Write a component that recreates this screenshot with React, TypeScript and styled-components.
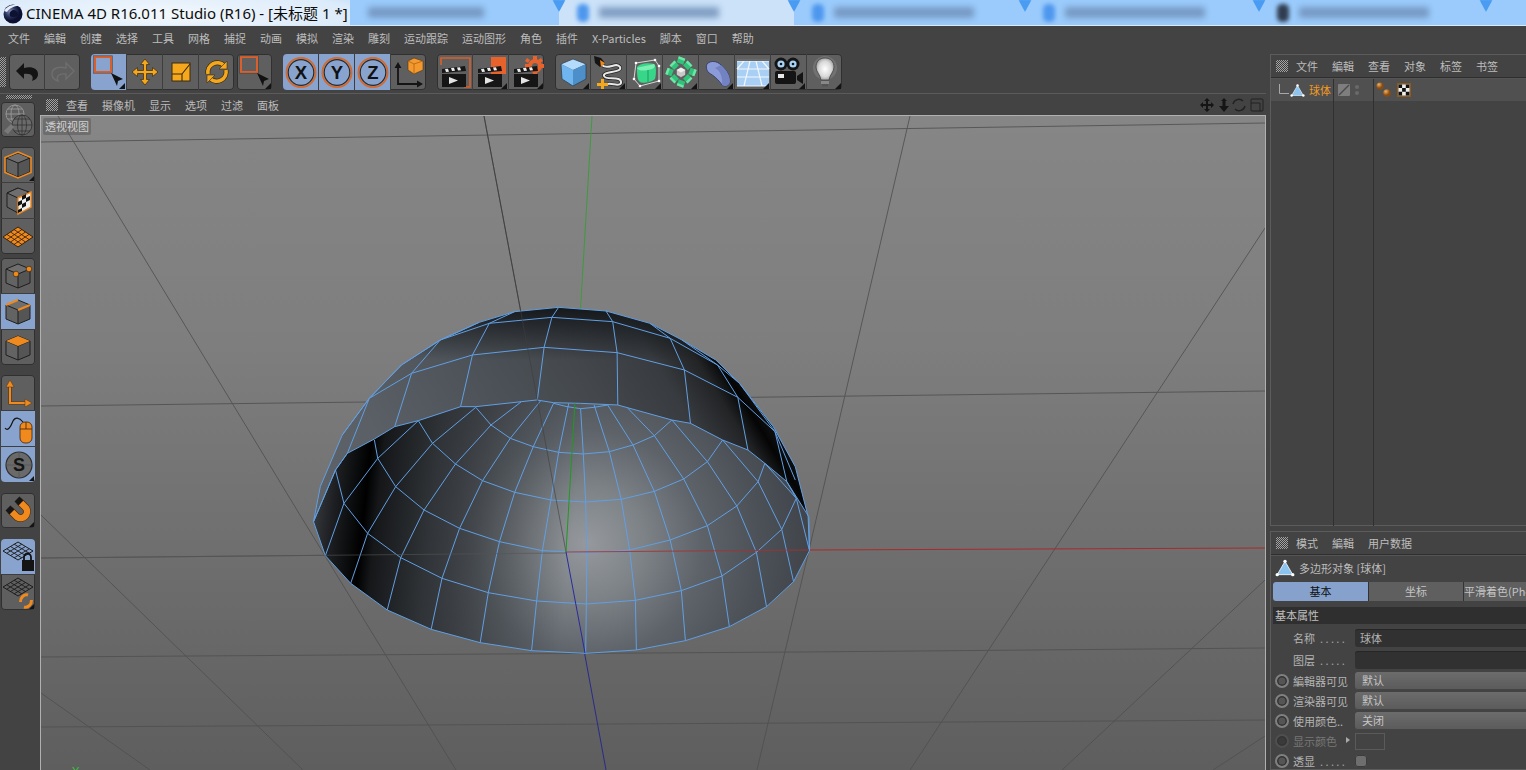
import React from "react";
import styled, { createGlobalStyle } from "styled-components";

const GlobalStyle = createGlobalStyle`
  html, body { margin: 0; padding: 0; width: 1526px; height: 770px; overflow: hidden; background: #434343; }
  * { box-sizing: border-box; }
`;

const CJK = `"Noto Sans CJK SC", "Noto Sans", sans-serif`;
const dots = `repeating-conic-gradient(#b4b4b4 0 25%, #3c3c3c 0 50%) 0 0 / 2px 2px`;

const Page = styled.div`
  width: 1526px; height: 770px; overflow: hidden; display: flex; flex-direction: column;
  background: #434343; font-family: ${CJK}; font-size: 11px; color: #bcbcbc;
`;
const TitleBar = styled.div`
  height: 26px; flex: none; display: flex; border-bottom: 1px solid #dcebf8; overflow: hidden;
`;
const TitleLeft = styled.div`
  width: 350px; flex: none; display: flex; align-items: center; padding-left: 2px; gap: 2px;
  background: radial-gradient(ellipse 275px 36px at 165px 14px, #f3f8fc 0, #dcebfa 68%, #a5d0fb 100%);
  background-color: #a5d0fb;
`;
const TitleText = styled.span`
  font-family: "Noto Sans", "Noto Sans CJK SC", sans-serif; font-size: 15px; color: #0c0c0c; white-space: nowrap; line-height: 24px;
`;
const BlurTab = styled.div<{ $w: number; $active?: boolean; $plain?: boolean }>`
  position: relative; width: ${(p) => p.$w}px; flex: none; display: flex; align-items: center; gap: 10px; padding-left: 18px;
  background: ${(p) => (p.$active ? "#cbe2f9" : "#9acbfc")};
  &::before {
    content: ""; display: ${(p) => (p.$plain ? "none" : "block")}; position: absolute; left: -7px; top: -1px; width: 14px; height: 13px;
    background: #4a9cf2; clip-path: polygon(0 0, 100% 0, 50% 100%); filter: blur(1px); z-index: 1;
  }
`;
const TabIcon = styled.i<{ $dark?: boolean }>`
  width: 12px; height: 18px; border-radius: 5px; flex: none; filter: blur(2px);
  background: ${(p) => (p.$dark ? "#303c50" : "#4e97ee")};
`;
const TabGhost = styled.i<{ $w: number }>`
  width: ${(p) => p.$w}px; height: 11px; flex: none; filter: blur(3px); background: #6e8db6; opacity: .8;
`;
const MenuBar = styled.div`
  height: 24px; flex: none; display: flex; align-items: center; gap: 14px; padding-left: 8px; line-height: 24px;
`;
const Item = styled.span`
  white-space: nowrap; font-size: 11px; color: #bdbdbd;
`;
const Main = styled.div`
  flex: 1; display: flex; min-height: 0;
`;
const LeftArea = styled.div`
  width: 1266px; flex: none; display: flex; flex-direction: column; margin-right: 4px;
`;
const Toolbar = styled.div`
  height: 44px; flex: none; display: flex; padding-top: 4px; border-bottom: 1px solid #5b5b5b; gap: 11px; width: 1266px;
`;
const Handle = styled.i`
  width: 6px; height: 30px; margin: 3px -8px 0 0; background: ${dots}; opacity: .8;
`;
const Cluster = styled.div`
  display: flex; gap: 3px;
`;
const ToolGroup = styled.div`
  display: flex; height: 36px; border-radius: 4px; overflow: hidden; box-shadow: inset 0 0 0 1px #303030; background: #5f5f5f;
`;
const ToolButton = styled.div<{ $active?: boolean; $corner?: boolean }>`
  position: relative; width: 36px; height: 36px; flex: none; display: flex; align-items: center; justify-content: center;
  border-left: 1px solid #3e3e3e; background: ${(p) => (p.$active ? "#88a4ce" : "transparent")};
  &:first-child { width: 35px; border-left: 0; }
  &::after {
    content: ""; display: ${(p) => (p.$corner ? "block" : "none")}; position: absolute; right: 1px; bottom: 1px;
    border-style: solid; border-width: 0 0 6px 6px; border-color: transparent transparent #141414 transparent;
  }
`;
const Workspace = styled.div`
  flex: 1; display: flex; min-height: 0;
`;
const Sidebar = styled.div`
  width: 40px; flex: none; padding-left: 1px; display: flex; flex-direction: column;
`;
const SideHandle = styled.i`
  width: 26px; height: 4px; margin: 1px 0 3px 5px; background: ${dots}; opacity: .8;
`;
const SideGroup = styled.div<{ $gap: number }>`
  width: 34px; margin-top: ${(p) => p.$gap}px; border-radius: 4px; overflow: hidden; box-shadow: inset 0 0 0 1px #303030;
  background: #5f5f5f; display: flex; flex-direction: column;
`;
const SideButton = styled.div<{ $active?: boolean; $corner?: boolean }>`
  position: relative; height: 36px; flex: none; display: flex; align-items: center; justify-content: center;
  border-top: 1px solid #3e3e3e; background: ${(p) => (p.$active ? "#88a4ce" : "transparent")};
  &:first-child { height: 35px; border-top: 0; }
  &::after {
    content: ""; display: ${(p) => (p.$corner ? "block" : "none")}; position: absolute; right: 1px; bottom: 1px;
    border-style: solid; border-width: 0 0 5px 5px; border-color: transparent transparent #141414 transparent;
  }
`;
const ViewPanel = styled.div`
  flex: 1; display: flex; flex-direction: column; min-width: 0;
`;
const PanelHeader = styled.div<{ $h: number; $pad: number }>`
  height: ${(p) => p.$h}px; flex: none; display: flex; align-items: center; padding-left: ${(p) => p.$pad}px; gap: 14px;
`;
const PanelHandle = styled.i`
  width: 12px; height: 12px; flex: none; background: ${dots}; margin-right: -6px; opacity: .85;
`;
const HeaderIcons = styled.div`
  margin-left: auto; display: flex; align-items: center; gap: 2px; padding-right: 1px;
`;
const Viewport = styled.div`
  position: relative; flex: 1; min-height: 0; overflow: hidden; border: 1px solid #b0b0b0; border-bottom: 0;
  background: linear-gradient(180deg, #868686 0, #7e7e7e 35%, #6d6d6d 70%, #5e5e5e 100%);
  svg { display: block; }
`;
const ViewLabel = styled.span`
  position: absolute; left: 2px; top: 2px; height: 17px; line-height: 17px; padding: 0 2px; border-radius: 2px;
  background: rgba(90, 90, 90, .55); color: #d0d0d0; font-size: 11px;
`;
const RightCol = styled.div`
  flex: 1; min-width: 0; display: flex; flex-direction: column; padding-top: 4px; gap: 5px;
`;
const Panel = styled.div<{ $h?: number }>`
  ${(p) => (p.$h ? `height: ${p.$h}px; flex: none;` : "flex: 1; min-height: 0;")}
  border: 1px solid #5c5c5c; border-right: 0; border-bottom: 0; display: flex; flex-direction: column; overflow: hidden;
  box-shadow: inset 0 -1px 0 #5c5c5c;
`;
const PanelBar = styled(PanelHeader)`
  border-bottom: 1px solid #2f2f2f; box-shadow: 0 1px 0 #555;
`;
const ObjColumns = styled.div`
  flex: 1; display: grid; grid-template-columns: 63px 40px 1fr; margin-top: 1px; min-height: 0;
`;
const ObjCol = styled.div<{ $last?: boolean }>`
  border-right: ${(p) => (p.$last ? "0" : "1px solid #303030")};
`;
const ObjCell = styled.div<{ $pad: number }>`
  height: 22px; background: #505050; display: flex; align-items: center; padding-left: ${(p) => p.$pad}px; gap: 4px;
`;
const ObjName = styled.span`
  color: #f29a1e; font-size: 11px;
`;
const ObjRow = styled.div`
  height: 27px; flex: none; display: flex; align-items: center; gap: 4px; padding-left: 4px; padding-bottom: 2px;
`;
const Tabs = styled.div`
  display: flex; margin: 0 0 0 2px; height: 19px; flex: none; border-radius: 3px 0 0 3px; overflow: hidden;
  box-shadow: inset 0 0 0 1px #2e2e2e;
`;
const Tab = styled.div<{ $active?: boolean; $w: number }>`
  width: ${(p) => p.$w}px; flex: none; text-align: center; line-height: 18px; white-space: nowrap; font-size: 11px;
  border-left: 1px solid #333; overflow: hidden;
  background: ${(p) => (p.$active ? "#86a2cc" : "#5f5f5f")}; color: ${(p) => (p.$active ? "#101010" : "#c4c4c4")};
  &:first-child { border-left: 0; }
`;
const SectionBar = styled.div`
  height: 17px; flex: none; margin: 6px 0 0 2px; background: #2f2f2f; padding-left: 2px; line-height: 17px; color: #c0c0c0;
`;
const AttrList = styled.div`
  display: flex; flex-direction: column; padding-left: 4px;
`;
const AttrRow = styled.div<{ $gap: number }>`
  height: 18px; flex: none; margin-top: ${(p) => p.$gap}px; display: flex; align-items: center;
`;
const Radio = styled.i<{ $dim?: boolean; $none?: boolean }>`
  width: 14px; height: 14px; flex: none; border-radius: 50%; margin-right: 4px; visibility: ${(p) => (p.$none ? "hidden" : "visible")};
  border: 2px solid ${(p) => (p.$dim ? "#4f4f4f" : "#808080")}; background: ${(p) => (p.$dim ? "#3a3a3a" : "#555")};
  box-shadow: inset 0 0 0 1.5px #343434;
`;
const AttrLabel = styled.span<{ $dim?: boolean }>`
  width: 62px; flex: none; white-space: nowrap; overflow: hidden; font-size: 11px; color: ${(p) => (p.$dim ? "#777" : "#b4b4b4")};
`;
const LabelDots = styled.span`
  letter-spacing: 2.4px; margin-left: 5px; color: #a0a0a0;
`;
const FieldBox = styled.div`
  flex: 1; height: 18px; margin-right: -8px; background: #313131; border-radius: 3px; padding-left: 5px; line-height: 18px; color: #b4b4b4;
  box-shadow: inset 0 1px 0 #262626;
`;
const SelectBox = styled.div`
  flex: 1; height: 18px; margin-right: -8px; border-radius: 3px; padding-left: 7px; line-height: 16px; color: #c6c6c6;
  background: linear-gradient(180deg, #6c6c6c, #5a5a5a); box-shadow: inset 0 -1px 0 #444;
`;
const Swatch = styled.i`
  width: 30px; height: 17px; flex: none; border: 1px solid #5a5a5a; background: #434343;
`;
const Arrow = styled.i`
  width: 0; height: 0; flex: none; margin: 0 5px 3px -9px; border-style: solid; border-width: 3px 0 3px 4px; border-color: transparent transparent transparent #aaa;
`;
const Check = styled.i`
  width: 12px; height: 12px; flex: none; border-radius: 3px; background: #6e6e6e; box-shadow: inset 0 0 0 1px #3c3c3c;
`;

/* ---------- icon drawings ---------- */
const Ico: React.FC<{ children: React.ReactNode; s?: number }> = ({ children, s = 34 }) => (
  <svg width={s} height={s} viewBox="0 0 34 34" style={{ flex: "none" }}>{children}</svg>
);
const OR = "#f5a81c";
const OR2 = "#f08a1e";
const Logo = () => (
  <svg width="22" height="22" viewBox="0 0 22 22">
    <defs><radialGradient id="lg" cx=".35" cy=".35"><stop offset="0" stopColor="#7f8fb8" /><stop offset=".6" stopColor="#27315a" /><stop offset="1" stopColor="#0b1030" /></radialGradient></defs>
    <circle cx="11" cy="12" r="9.5" fill="url(#lg)" />
    <path d="M2 9 C6 2 16 1 21 5 C17 3 9 4 5 10 Z" fill="#e8eef8" />
    <path d="M11 8 C14 8 16 10 16 13 C14 15 10 16 8 14 C7 11 8 9 11 8Z" fill="#0c1230" />
  </svg>
);
const Undo = () => <Ico><path d="M6 16 L14 8 V13 C21 11 28 13 28 19 C28 23 25 25 22 26 C24 22 22 18 14 19 V24 Z" fill="#141414" /></Ico>;
const Redo = () => <Ico><path d="M28 16 L20 8 V13 C13 11 6 13 6 19 C6 23 9 25 12 26 C10 22 12 18 20 19 V24 Z" fill="none" stroke="#6e6e6e" strokeWidth="1.4" /></Ico>;
const SelIcon = ({ fill }: { fill: string }) => (
  <Ico>
    <rect x="3" y="2" width="16" height="15" fill={fill} stroke="#d8602c" strokeWidth="2" />
    <rect x="1.6" y=".8" width="18.8" height="17.4" fill="none" stroke="#444" strokeWidth=".6" />
    <path d="M19 18 L31 24 L26 26 L25 31 Z" fill="#111" />
  </Ico>
);
const Move = () => <Ico><path d="M17 4 L21.5 9.5 H18.5 V15.5 H24.5 V12.5 L30 17 L24.5 21.5 V18.5 H18.5 V24.5 H21.5 L17 30 L12.5 24.5 H15.5 V18.5 H9.5 V21.5 L4 17 L9.5 12.5 V15.5 H15.5 V9.5 H12.5 Z" fill={OR} stroke="#3a2a10" strokeWidth=".7" /></Ico>;
const Scale = () => (
  <Ico>
    <rect x="8" y="8" width="18" height="18" fill={OR} stroke="#3a2a10" />
    <path d="M8 19 H18 V26 M18 19 L26 9" fill="none" stroke="#3a2a10" strokeWidth="1.1" />
  </Ico>
);
const Rotate = () => (
  <Ico>
    <g fill="none" strokeLinecap="butt">
      <path d="M8 19 A9.5 9.5 0 0 1 24 10.5 M26 15 A9.5 9.5 0 0 1 10 23.5" stroke="#3a2a10" strokeWidth="5" />
      <path d="M8 19 A9.5 9.5 0 0 1 24 10.5 M26 15 A9.5 9.5 0 0 1 10 23.5" stroke={OR} strokeWidth="3.6" />
    </g>
    <path d="M27 6 V14 H19 Z M7 28 V20 H15 Z" fill={OR} stroke="#3a2a10" strokeWidth=".6" />
  </Ico>
);
const Axis = ({ l }: { l: string }) => (
  <Ico>
    <circle cx="17" cy="17.5" r="14.6" fill="#88a4ce" stroke="#d8692a" strokeWidth="1.8" />
    <circle cx="17" cy="17.5" r="12.8" fill="#88a4ce" stroke="#2a2a2a" strokeWidth="1.2" />
    <text x="17" y="24" textAnchor="middle" fontFamily="Liberation Sans" fontWeight="700" fontSize="18.5" fill="#111">{l}</text>
  </Ico>
);
const Coord = () => (
  <Ico>
    <path d="M6 12 V29 H26" fill="none" stroke="#141414" strokeWidth="1.8" />
    <path d="M6 7 L9.5 13 H2.5 Z M31 29 L25 25.5 V32.5 Z" fill="#141414" />
    <path d="M22 3 L31 6 L31 15 L22 19 L16 15 L16 6 Z" fill="#f29a2e" stroke="#5a3410" strokeWidth=".6" />
    <path d="M16 6 L22 9 L31 6 M22 9 V19" fill="none" stroke="#b86010" strokeWidth=".8" />
  </Ico>
);
const Clap = ({ kind }: { kind: 0 | 1 | 2 }) => (
  <Ico>
    {kind === 0 && <path d="M3 10 V3 H32 V32 H26" fill="none" stroke="#d8602c" strokeWidth="1.6" />}
    {kind === 1 && <path d="M17 2 H32 V19 H17 Z" fill="#e8622c" />}
    {kind === 2 && (
      <g fill="#e8622c">
        <circle cx="25" cy="11" r="7" />
        <path d="M23 1 H27 V5 H23 Z M23 17 H27 V21 H23 Z M15 9 H19 V13 H15 Z M31 9 H34 V13 H31 Z M17 3 L20 5 L18 8 L15 6 Z M31 3 L33 6 L30 8 L28 5 Z" />
        <circle cx="25" cy="11" r="3" fill="#5f5f5f" />
      </g>
    )}
    <path d="M4 14 L27 11 L28 16 L4 18 Z" fill="#161616" />
    <path d="M7 14 l3 -.3 1 3 -3 .3 Z M13 13 l3 -.3 1 3 -3 .3 Z M19 12.5 l3 -.3 1 3 -3 .3 Z" fill="#eee" />
    <rect x="4" y="19" width="24" height="13" fill="#161616" />
    <path d="M11 22 L20 25.5 L11 29 Z" fill="#e4e4e4" />
  </Ico>
);
const BlueCube = () => (
  <Ico>
    <path d="M17 4 L30 9 L17 15 L5 9 Z" fill="#b3dcfc" />
    <path d="M5 9 L17 15 V31 L6 24 Z" fill="#6fb6f1" />
    <path d="M17 15 L30 9 V24 L17 31 Z" fill="#4d8fc9" />
    <path d="M17 4 L30 9 V24 L17 31 L6 24 L5 9 Z" fill="none" stroke="#2d3a48" strokeWidth=".7" />
  </Ico>
);
const Pen = () => (
  <Ico>
    <path d="M10 10 C16 16 24 6 28 12 C31 18 10 16 12 21 C14 26 30 20 29 28 C28 32 20 28 16 29" fill="none" stroke="#222" strokeWidth="3.4" />
    <path d="M10 10 C16 16 24 6 28 12 C31 18 10 16 12 21 C14 26 30 20 29 28 C28 32 20 28 16 29" fill="none" stroke="#e8e8e8" strokeWidth="2" />
    <path d="M2 1 L9 3 L13 8 L8 12 L3 8 Z" fill="#151515" />
    <path d="M8 5 L13 8 L9 12 Z" fill={OR2} />
    <path d="M9 24 H12 V28 H16 V31 H12 V35 H9 V31 H5 V28 H9 Z" fill={OR} />
  </Ico>
);
const Nurbs = () => (
  <Ico>
    <path d="M8 8 L27 5 L31 11 V26 L12 31 L6 24 Z" fill="none" stroke="#e4e4e4" strokeWidth=".9" />
    <path d="M9 13 C9 9 20 7 26 9 C29 10 28 22 27 24 C24 27 14 29 12 27 C9 25 9 18 9 13 Z" fill="#37d688" />
    <path d="M9 13 C12 12 22 10 26 9 C28 12 26 14 20 15 C15 16 11 16 9 13 Z" fill="#7bf0b2" />
    <path d="M20 15 V28" stroke="#1f9c60" strokeWidth="1" />
    <g fill="#fff"><circle cx="8" cy="8" r="1.3" /><circle cx="27" cy="5" r="1.3" /><circle cx="31" cy="11" r="1.3" /><circle cx="31" cy="26" r="1.3" /><circle cx="12" cy="31" r="1.3" /><circle cx="6" cy="24" r="1.3" /></g>
  </Ico>
);
const Flower = () => {
  const a = [0, 45, 90, 135, 180, 225, 270, 315];
  return (
    <Ico>
      {a.map((d, i) => (
        <g key={d} transform={`rotate(${d} 17 17) translate(17 ${i % 2 ? 7.5 : 5.5}) rotate(${i % 2 ? 0 : 20})`}>
          <rect x="-3.4" y="-3.2" width="6.8" height="6.4" fill="#2fc47a" />
          <rect x="-3.4" y="-3.2" width="6.8" height="2.4" fill="#6fe6a6" />
        </g>
      ))}
      <path d="M17 12.5 L21.5 15 V20 L17 22.5 L12.5 20 V15 Z" fill="#c8c8c8" stroke="#555" strokeWidth=".5" />
      <path d="M17 12.5 L21.5 15 L17 17.5 L12.5 15 Z" fill="#f0f0f0" />
    </Ico>
  );
};
const Bend = () => (
  <Ico>
    <path d="M7 9 C11 5 17 6 21 10 C27 15 30 21 30 27 C29 31 25 32 22 30 C19 25 13 20 9 18 C6 15 6 11 7 9 Z" fill="#8b9bd8" stroke="#2e3660" strokeWidth=".8" />
    <path d="M21 10 C27 15 30 21 30 27 C29 31 25 32 22 30 C23 24 21 16 15 13 Z" fill="#7282c2" />
  </Ico>
);
const Floor = () => (
  <Ico>
    <rect x="1" y="4" width="32" height="8" fill="#8a8a8a" />
    <path d="M1 6 H33 L33 31 H1 Z" fill="#a9d0f4" />
    <path d="M1 6 H33 M1 14 H33 M1 22 H33 M1 31 H33 M8 6 L1 14 M14 6 L8 31 M20 6 L26 31 M26 6 L33 14" stroke="#f0f6fc" strokeWidth="1.2" fill="none" />
    <rect x="1" y="4" width="32" height="2" fill="#6a6a6a" />
  </Ico>
);
const Camera = () => (
  <Ico>
    <circle cx="9" cy="9" r="6.5" fill="#141414" /><circle cx="21" cy="9" r="6.5" fill="#141414" />
    <circle cx="9" cy="9" r="3.6" fill="#a8d4f8" /><circle cx="21" cy="9" r="3.6" fill="#a8d4f8" />
    <circle cx="9" cy="9" r="1.3" fill="#141414" /><circle cx="21" cy="9" r="1.3" fill="#141414" />
    <rect x="3" y="16" width="21" height="13" rx="2" fill="#141414" />
    <rect x="6" y="19" width="6" height="4" fill="#e8e8e8" />
    <path d="M25 21 L31 17 V29 L25 25 Z" fill="#141414" />
  </Ico>
);
const Bulb = () => (
  <Ico>
    <defs><radialGradient id="bg"><stop offset="0" stopColor="#fff" /><stop offset=".7" stopColor="#d8d8d8" /><stop offset="1" stopColor="#a8a8a8" /></radialGradient></defs>
    <circle cx="17" cy="13" r="12" fill="#fff" opacity=".12" />
    <path d="M17 3 C23 3 26 7 26 12 C26 17 22 19 21 25 H13 C12 19 8 17 8 12 C8 7 11 3 17 3 Z" fill="url(#bg)" stroke="#444" strokeWidth=".8" />
    <rect x="13" y="26" width="8" height="3" fill="#888" /><rect x="14" y="29" width="6" height="2.5" fill="#555" />
  </Ico>
);
const CubeFaces = () => (
  <g>
    <path d="M17 5 L29 10 L17 15 L5 10 Z" fill="#6e6e6e" />
    <path d="M5 10 L17 15 V29 L5 24 Z" fill="#636363" />
    <path d="M17 15 L29 10 V24 L17 29 Z" fill="#555" />
    <path d="M17 5 L29 10 V24 L17 29 L5 24 V10 Z M5 10 L17 15 L29 10 M17 15 V29" fill="none" stroke="#1e1e1e" strokeWidth="1" />
  </g>
);
const Globe = () => (
  <Ico>
    <g fill="none" stroke="#9a9a9a" strokeWidth=".9">
      <circle cx="14" cy="11" r="9" /><ellipse cx="14" cy="11" rx="4" ry="9" /><path d="M5 11 H23 M7 6 H21 M7 16 H21" />
    </g>
    <g fill="#6a6a6a" stroke="#333" strokeWidth=".9">
      <circle cx="21" cy="22" r="10" />
    </g>
    <g fill="none" stroke="#333" strokeWidth=".8">
      <ellipse cx="21" cy="22" rx="4.5" ry="10" /><path d="M11 22 H31 M13 16 H29 M13 28 H29 M21 12 V32" />
    </g>
    <path d="M3 28 L10 21 L13 24 L7 31 Z" fill="#7a7a7a" />
  </Ico>
);
const ModelIcon = () => (
  <Ico>
    <CubeFaces />
    <path d="M17 4 L30 9.5 V24.5 L17 30 L4 24.5 V9.5 Z" fill="none" stroke={OR2} strokeWidth="1.6" />
  </Ico>
);
const TexIcon = () => (
  <Ico>
    <path d="M17 4 L6 9 V23 L17 29 Z" fill="#646464" stroke="#1e1e1e" />
    <path d="M6 9 L17 4 L28 8 L17 14 Z" fill="#6e6e6e" stroke="#1e1e1e" />
    <path d="M17 14 L30 8 V23 L17 30 Z" fill="#eee" stroke={OR2} strokeWidth="1.4" />
    <path d="M17 18 L21 16 V20 L17 22 Z M21 20 L25 18 V22 L21 24 Z M25 14 L29 12 V16 L25 18 Z M21 12 L25 10 V14 L21 16 Z M17 26 L21 24 V27 L17 29 Z" fill="#111" />
  </Ico>
);
const Workplane = () => (
  <Ico>
    <path d="M17 7 L32 17 L17 27 L2 17 Z" fill={OR2} stroke="#2a1a08" strokeWidth=".9" />
    <path d="M9.5 12 L24.5 22 M13 9.5 L28 19.5 M6 14.5 L21 24.5 M24.5 12 L9.5 22 M21 9.5 L6 19.5 M28 14.5 L13 24.5" stroke="#2a1a08" strokeWidth=".8" />
  </Ico>
);
const PointIcon = () => (
  <Ico>
    <CubeFaces />
    <circle cx="15" cy="15" r="2.8" fill={OR2} stroke="#2a1a08" strokeWidth=".6" />
    <circle cx="28" cy="10" r="2.8" fill={OR2} stroke="#2a1a08" strokeWidth=".6" />
  </Ico>
);
const EdgeIcon = () => (
  <Ico>
    <CubeFaces />
    <path d="M5 10 L17 5 M17 15 L29 10" stroke={OR2} strokeWidth="2" />
  </Ico>
);
const PolyIcon = () => (
  <Ico>
    <CubeFaces />
    <path d="M17 5 L29 10 L17 15 L5 10 Z" fill={OR2} />
  </Ico>
);
const OrangeAxis = () => (
  <Ico>
    <path d="M9 11 V27 H25" fill="none" stroke="#5a3410" strokeWidth="3.2" />
    <path d="M9 11 V27 H25" fill="none" stroke={OR2} strokeWidth="2" />
    <path d="M9 4 L13 11 H5 Z M31 27 L24 23 V31 Z" fill={OR2} stroke="#5a3410" strokeWidth=".5" />
  </Ico>
);
const Mouse = () => (
  <Ico>
    <path d="M4 16 C7 20 10 14 12 9 C14 5 18 5 22 10" fill="none" stroke="#141414" strokeWidth="1.2" />
    <rect x="19" y="10" width="12" height="21" rx="5" fill={OR2} stroke="#3a2208" strokeWidth=".8" />
    <path d="M19 17 H31 M25 10 V17" stroke="#3a2208" strokeWidth=".8" />
  </Ico>
);
const SnapS = () => (
  <Ico>
    <circle cx="18" cy="17" r="13" fill="#6a6a6a" stroke="#2e2e2e" strokeWidth="1.2" />
    <path d="M5 17 H31 M18 4 V30" stroke="#555" strokeWidth=".8" />
    <text x="18" y="23" textAnchor="middle" fontFamily="Liberation Sans" fontWeight="700" fontSize="18" fill="#141414">S</text>
  </Ico>
);
const Magnet = () => (
  <Ico>
    <path d="M9 16 L16 23 A6.5 6.5 0 0 0 25 14 L18 7" fill="none" stroke="#4a2a08" strokeWidth="7.6" />
    <path d="M9 16 L16 23 A6.5 6.5 0 0 0 25 14 L18 7" fill="none" stroke={OR2} strokeWidth="6.4" />
    <path d="M7 14 L11 18 M16 5 L20 9" stroke="#161616" strokeWidth="7" />
  </Ico>
);
const MiniGrid = () => (
  <g>
    <path d="M17 2 L32 11 L17 20 L2 11 Z" fill="none" stroke="#1c1c1c" strokeWidth="1" />
    <path d="M9.5 6.5 L24.5 15.5 M13.2 4.2 L28.2 13.2 M5.8 8.8 L20.8 17.8 M24.5 6.5 L9.5 15.5 M20.8 4.2 L5.8 13.2 M28.2 8.8 L13.2 17.8" stroke="#1c1c1c" strokeWidth=".9" />
  </g>
);
const GridLock = () => (
  <Ico>
    <MiniGrid />
    <path d="M24 19 V15 A3.5 3.5 0 0 1 31 15 V19" fill="none" stroke="#111" strokeWidth="1.8" transform="translate(-1 2)" />
    <rect x="21" y="20" width="12" height="11" fill="#141414" />
  </Ico>
);
const GridRot = () => (
  <Ico>
    <MiniGrid />
    <path d="M19.5 26 A6 7 0 0 1 27 19 M30.5 24 A6 7 0 0 1 23 31" fill="none" stroke={OR2} strokeWidth="3" />
  </Ico>
);
const Tri = ({ s = 18 }: { s?: number }) => (
  <svg width={s} height={s} viewBox="0 0 18 18" style={{ flex: "none" }}>
    <path d="M9 3 L16 15 H2 Z" fill="#8cc4f0" stroke="#fff" strokeWidth=".7" />
    <circle cx="9" cy="3" r="1.5" fill="#fff" /><circle cx="2" cy="15" r="1.5" fill="#fff" /><circle cx="16" cy="15" r="1.5" fill="#fff" />
  </svg>
);
const VpIcons = () => (
  <svg width="65" height="16" viewBox="0 0 65 16">
    <path d="M7 1 L10 4 H8 V7 H11 V5 L14 8 L11 11 V9 H8 V12 H10 L7 15 L4 12 H6 V9 H3 V11 L0 8 L3 5 V7 H6 V4 H4 Z" fill="#151515" />
    <path d="M24 1 L27 4 H25.5 V9 H29 L24 15 L19 9 H22.5 V4 H21 Z" fill="#151515" />
    <path d="M33 7 A6 6 0 0 1 43 4 M45 9 A6 6 0 0 1 35 12" fill="none" stroke="#222" strokeWidth="1.4" />
    <rect x="51" y="2" width="12" height="12" rx="1" fill="none" stroke="#222" />
    <path d="M51 6 H60 V14" fill="none" stroke="#222" />
  </svg>
);
const Elbow = () => (
  <svg width="11" height="12" viewBox="0 0 11 12" style={{ flex: "none", marginRight: -3 }}>
    <path d="M1.5 0 V9.5 H11" fill="none" stroke="#a8a8a8" />
  </svg>
);
const VisTag = () => (
  <svg width="24" height="16" viewBox="0 0 24 16">
    <rect x="1" y="2" width="12" height="12" rx="1" fill="#7e7e7e" />
    <path d="M2 13 L12 3" stroke="#4a4a4a" strokeWidth="1.4" />
    <circle cx="20" cy="5" r="2" fill="#6a6a6a" /><circle cx="20" cy="11" r="2" fill="#6a6a6a" />
  </svg>
);
const SpheresTag = () => (
  <svg width="38" height="18" viewBox="0 0 38 18">
    <defs><radialGradient id="sp" cx=".35" cy=".3"><stop offset="0" stopColor="#f0b060" /><stop offset="1" stopColor="#8a4a10" /></radialGradient></defs>
    <circle cx="4" cy="5" r="3.6" fill="url(#sp)" /><circle cx="11" cy="12" r="3.8" fill="url(#sp)" />
    <rect x="21" y="2" width="14" height="14" fill="#8a5a20" />
    <rect x="22.5" y="3.5" width="11" height="11" fill="#eee" />
    <path d="M22.5 3.5 h3.6 v3.6 h-3.6 Z M29.8 3.5 h3.6 v3.6 h-3.6 Z M26.1 7.1 h3.7 v3.7 h-3.7 Z M22.5 10.8 h3.6 v3.6 h-3.6 Z M29.8 10.8 h3.6 v3.6 h-3.6 Z" fill="#111" />
  </svg>
);

/* ---------- 3D viewport drawing ---------- */
const grid = [
  "41,142 1265,123", "41,406 1265,391", "41,558 566,553", "41,657 800,652 1265,648", "41,727 800,723 1265,720",
  "58,116 300,515 456,770", "910,116 809,550 757,770", "1265,228 910,770", "1265,580 1062,770", "1265,736 1213,770",
  "41,515 303,770", "41,693 150,770",
];
const silhouette = "40,695 60,590 125,435 205,325 300,225 415,150 530,97 635,65 765,52 905,63 1035,100 1130,150 1230,210 1300,280 1400,410 1465,530 1503,680 1507,782 1460,875 1380,950 1270,1010 1140,1052 995,1080 845,1090 685,1082 533,1058 388,1018 258,960 150,880 75,797";
const rim = "40,695 105,540 140,490 220,447 280,410 350,392 475,350 520,350 655,335 700,330 750,338 830,340 940,345 1100,390 1155,400 1250,450 1325,480 1375,520 1440,575 1505,680 1507,782";
const bottom = "1507,782 1460,875 1380,950 1270,1010 1140,1052 995,1080 845,1090 685,1082 533,1058 388,1018 258,960 150,880 75,797 40,695";
const mesh = [
  "750,340 790,350 830,356 870,352 910,345",
  "520,352 565,405 622,445 690,470 765,487 838,492 915,485 985,465 1048,437 1100,390",
  "350,392 392,460 460,522 540,572 635,607 742,630 845,636 950,628 1048,604 1135,567 1205,515 1250,450",
  "220,450 230,505 283,590 367,660 472,715 590,755 717,782 848,788 975,780 1095,750 1205,707 1292,648 1355,575 1375,520",
  "105,540 130,640 200,730 298,803 420,865 557,908 700,933 847,942 992,931 1128,902 1248,858 1350,787 1425,718 1468,625 1440,575",
  "40,695 105,540", "75,797 130,640 230,505 350,392", "150,880 200,730 283,590 392,460 520,352",
  "258,960 298,803 367,660 460,522 565,405 655,335", "388,1018 420,865 472,715 540,572 622,445 712,332",
  "533,1058 557,908 590,755 635,607 690,470 750,340", "685,1082 700,933 717,782 742,630 765,487 795,340",
  "845,1090 847,942 848,788 845,636 838,492 830,356", "995,1080 992,931 975,780 950,628 915,485 870,345",
  "1140,1052 1128,902 1095,750 1048,604 985,465 910,345", "1270,1010 1248,858 1205,707 1135,567 1048,437 970,355",
  "1380,950 1350,787 1292,648 1205,515 1100,390", "1460,875 1425,718 1355,575 1250,450", "1507,782 1468,625 1375,520",
  "205,325 330,250 510,195 722,172 938,188 1137,240 1295,322 1405,425 1465,570",
  "125,435 205,325", "300,225 415,150 560,100 745,82 925,95 1095,145 1235,225 1300,280",
  "765,52 745,82 722,172 702,330", "905,63 925,95 938,188 940,345", "635,65 560,100 510,195 475,350",
  "530,97 415,150 330,250 280,410", "300,225 205,325 140,490 105,540", "1035,100 1095,145 1137,240 1155,400",
  "1130,150 1235,225 1295,322 1325,480", "1300,280 1405,425 1440,575", rim,
];
const Scene = () => (
  <svg width="1224" height="654" viewBox="41 116 1224 654">
    <defs>
      <linearGradient id="outerG" gradientUnits="userSpaceOnUse" x1="40" y1="1080" x2="1507" y2="200">
        <stop offset="0" stopColor="#5e646a" /><stop offset=".285" stopColor="#5a6066" /><stop offset=".48" stopColor="#4d5359" />
        <stop offset=".645" stopColor="#44484d" /><stop offset=".766" stopColor="#383b3f" /><stop offset=".83" stopColor="#222426" />
        <stop offset=".862" stopColor="#050505" /><stop offset=".9" stopColor="#1c1c1c" /><stop offset="1" stopColor="#1c1c1c" />
      </linearGradient>
      <linearGradient id="topG" gradientUnits="userSpaceOnUse" x1="0" y1="50" x2="0" y2="210">
        <stop offset="0" stopColor="#101316" stopOpacity=".9" /><stop offset="1" stopColor="#101316" stopOpacity="0" />
      </linearGradient>
      <radialGradient id="innerG" gradientUnits="userSpaceOnUse" cx="850" cy="760" r="680">
        <stop offset="0" stopColor="#95999d" /><stop offset=".25" stopColor="#7d8287" /><stop offset=".5" stopColor="#5d6369" />
        <stop offset=".75" stopColor="#4c5158" /><stop offset="1" stopColor="#3f4348" />
      </radialGradient>
      <linearGradient id="darkG" gradientUnits="userSpaceOnUse" x1="40" y1="700" x2="800" y2="780">
        <stop offset="0" stopColor="#34373b" stopOpacity="1" /><stop offset=".07" stopColor="#1d1f22" stopOpacity="1" />
        <stop offset=".14" stopColor="#0c0d0e" stopOpacity="1" /><stop offset=".19" stopColor="#000" stopOpacity="1" />
        <stop offset=".24" stopColor="#141618" stopOpacity=".98" /><stop offset=".45" stopColor="#2b2e31" stopOpacity=".85" />
        <stop offset=".7" stopColor="#2f3236" stopOpacity=".4" /><stop offset="1" stopColor="#2f3236" stopOpacity="0" />
      </linearGradient>
    </defs>
    <g fill="none" stroke="#505050" strokeWidth="1" opacity=".85">
      {grid.map((g) => <polyline key={g} points={g} />)}
    </g>
    <polyline points="566,552 809,550 1265,548" fill="none" stroke="#a92a2a" strokeWidth="1" />
    <polyline points="566,552 592,116" fill="none" stroke="#3f9a3f" strokeWidth="1" />
    <polyline points="484,116 566,552" fill="none" stroke="#484848" strokeWidth="1" />
    <polyline points="566,552 606,770" fill="none" stroke="#2a2a8c" strokeWidth="1" />
    <g transform="translate(300 290) scale(.33807 .33333)">
      <polygon points={silhouette} fill="url(#outerG)" />
      <polygon points={silhouette} fill="url(#topG)" />
      <polygon points={`${rim} ${bottom}`} fill="url(#innerG)" />
      <polygon points={`${rim} ${bottom}`} fill="url(#darkG)" />
      <g fill="none" stroke="#619fe3" strokeWidth="1" strokeLinejoin="round">
        {mesh.map((m) => <polyline key={m} points={m} vectorEffect="non-scaling-stroke" />)}
        <polygon points={silhouette} vectorEffect="non-scaling-stroke" />
      </g>
    </g>
    <polyline points="484,116 566,552" fill="none" stroke="#3e3e3e" strokeWidth="1" opacity=".6" />
    <polyline points="566,552 592,116" fill="none" stroke="#1f9a1f" strokeWidth="1" strokeDasharray="149 400" />
    <polyline points="41,558 566,553" fill="none" stroke="#555" strokeWidth="1" opacity=".6" />
    <polyline points="566,552 809,550" fill="none" stroke="#a83030" strokeWidth="1" opacity=".85" />
    <polyline points="566,552 585,653" fill="none" stroke="#2a2a9c" strokeWidth="1" />
    <text x="72" y="775" fontFamily="Liberation Sans" fontSize="11" fill="#35c435">Y</text>
  </svg>
);

const topMenu = ["文件", "編輯", "创建", "选择", "工具", "网格", "捕捉", "动画", "模拟", "渲染", "雕刻", "运动跟踪", "运动图形", "角色", "插件", "X-Particles", "脚本", "窗口", "帮助"];
const viewMenu = ["查看", "摄像机", "显示", "选项", "过滤", "面板"];
const objMenu = ["文件", "編輯", "查看", "对象", "标签", "书签"];
const attrMenu = ["模式", "編輯", "用户数据"];

export default function App() {
  return (
    <Page>
      <GlobalStyle />
      <TitleBar>
        <TitleLeft>
          <Logo />
          <TitleText>CINEMA 4D R16.011 Studio (R16) - [未标题 1 *]</TitleText>
        </TitleLeft>
        <BlurTab $w={209} $plain><TabGhost $w={116} /></BlurTab>
        <BlurTab $w={235} $active><TabIcon /><TabGhost $w={120} /></BlurTab>
        <BlurTab $w={231}><TabIcon /><TabGhost $w={140} /></BlurTab>
        <BlurTab $w={234}><TabIcon /><TabGhost $w={140} /></BlurTab>
        <BlurTab $w={227}><TabIcon $dark /><TabGhost $w={130} /></BlurTab>
        <BlurTab $w={40} />
      </TitleBar>
      <MenuBar>{topMenu.map((m) => <Item key={m}>{m}</Item>)}</MenuBar>
      <Main>
        <LeftArea>
          <Toolbar>
            <Handle />
            <ToolGroup>
              <ToolButton><Undo /></ToolButton>
              <ToolButton><Redo /></ToolButton>
            </ToolGroup>
            <Cluster>
              <ToolGroup>
                <ToolButton $active $corner><SelIcon fill="#88a4ce" /></ToolButton>
                <ToolButton><Move /></ToolButton>
                <ToolButton><Scale /></ToolButton>
                <ToolButton><Rotate /></ToolButton>
              </ToolGroup>
              <ToolGroup>
                <ToolButton $corner><SelIcon fill="none" /></ToolButton>
              </ToolGroup>
            </Cluster>
            <ToolGroup>
              <ToolButton $active><Axis l="X" /></ToolButton>
              <ToolButton $active><Axis l="Y" /></ToolButton>
              <ToolButton $active><Axis l="Z" /></ToolButton>
              <ToolButton><Coord /></ToolButton>
            </ToolGroup>
            <ToolGroup>
              <ToolButton><Clap kind={0} /></ToolButton>
              <ToolButton $corner><Clap kind={1} /></ToolButton>
              <ToolButton $corner><Clap kind={2} /></ToolButton>
            </ToolGroup>
            <ToolGroup>
              <ToolButton $corner><BlueCube /></ToolButton>
              <ToolButton $corner><Pen /></ToolButton>
              <ToolButton $corner><Nurbs /></ToolButton>
              <ToolButton $corner><Flower /></ToolButton>
              <ToolButton $corner><Bend /></ToolButton>
              <ToolButton $corner><Floor /></ToolButton>
              <ToolButton $corner><Camera /></ToolButton>
              <ToolButton $corner><Bulb /></ToolButton>
            </ToolGroup>
          </Toolbar>
          <Workspace>
            <Sidebar>
              <SideHandle />
              <SideGroup $gap={0}><SideButton><Globe /></SideButton></SideGroup>
              <SideGroup $gap={10}>
                <SideButton $corner><ModelIcon /></SideButton>
                <SideButton><TexIcon /></SideButton>
                <SideButton><Workplane /></SideButton>
              </SideGroup>
              <SideGroup $gap={4}>
                <SideButton><PointIcon /></SideButton>
                <SideButton $active><EdgeIcon /></SideButton>
                <SideButton><PolyIcon /></SideButton>
              </SideGroup>
              <SideGroup $gap={10}>
                <SideButton><OrangeAxis /></SideButton>
                <SideButton $active><Mouse /></SideButton>
                <SideButton $active $corner><SnapS /></SideButton>
              </SideGroup>
              <SideGroup $gap={11}><SideButton $corner><Magnet /></SideButton></SideGroup>
              <SideGroup $gap={11}>
                <SideButton $active><GridLock /></SideButton>
                <SideButton $corner><GridRot /></SideButton>
              </SideGroup>
            </Sidebar>
            <ViewPanel>
              <PanelHeader $h={21} $pad={6}>
                <PanelHandle />
                {viewMenu.map((m) => <Item key={m}>{m}</Item>)}
                <HeaderIcons><VpIcons /></HeaderIcons>
              </PanelHeader>
              <Viewport>
                <Scene />
                <ViewLabel>透视视图</ViewLabel>
              </Viewport>
            </ViewPanel>
          </Workspace>
        </LeftArea>
        <RightCol>
          <Panel $h={472}>
            <PanelBar $h={23} $pad={5}>
              <PanelHandle />
              {objMenu.map((m) => <Item key={m}>{m}</Item>)}
            </PanelBar>
            <ObjColumns>
              <ObjCol><ObjCell $pad={7}><Elbow /><Tri s={15} /><ObjName>球体</ObjName></ObjCell></ObjCol>
              <ObjCol><ObjCell $pad={3}><VisTag /></ObjCell></ObjCol>
              <ObjCol $last><ObjCell $pad={2}><SpheresTag /></ObjCell></ObjCol>
            </ObjColumns>
          </Panel>
          <Panel>
            <PanelBar $h={23} $pad={5}>
              <PanelHandle />
              {attrMenu.map((m) => <Item key={m}>{m}</Item>)}
            </PanelBar>
            <ObjRow><Tri s={20} /><Item>多边形对象 [球体]</Item></ObjRow>
            <Tabs>
              <Tab $active $w={95}>基本</Tab>
              <Tab $w={95}>坐标</Tab>
              <Tab $w={70}>平滑着色(Phong)</Tab>
            </Tabs>
            <SectionBar>基本属性</SectionBar>
            <AttrList>
              <AttrRow $gap={5}><Radio $none /><AttrLabel>名称<LabelDots>.....</LabelDots></AttrLabel><FieldBox>球体</FieldBox></AttrRow>
              <AttrRow $gap={4}><Radio $none /><AttrLabel>图层<LabelDots>.....</LabelDots></AttrLabel><FieldBox /></AttrRow>
              <AttrRow $gap={3}><Radio /><AttrLabel>編輯器可见</AttrLabel><SelectBox>默认</SelectBox></AttrRow>
              <AttrRow $gap={2}><Radio /><AttrLabel>渲染器可见</AttrLabel><SelectBox>默认</SelectBox></AttrRow>
              <AttrRow $gap={2}><Radio /><AttrLabel>使用颜色..</AttrLabel><SelectBox>关闭</SelectBox></AttrRow>
              <AttrRow $gap={2}><Radio $dim /><AttrLabel $dim>显示颜色</AttrLabel><Arrow /><Swatch /></AttrRow>
              <AttrRow $gap={2}><Radio /><AttrLabel>透显<LabelDots>.....</LabelDots></AttrLabel><Check /></AttrRow>
            </AttrList>
          </Panel>
        </RightCol>
      </Main>
    </Page>
  );
}
